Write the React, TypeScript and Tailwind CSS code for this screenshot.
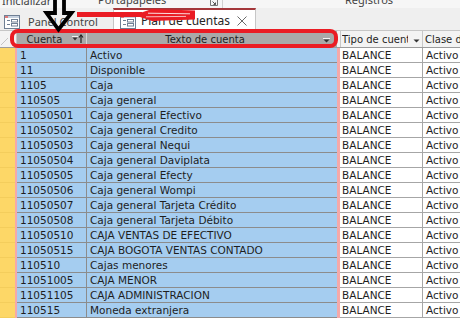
import React from "react";

const rows: [string, string][] = [
  ["1", "Activo"],
  ["11", "Disponible"],
  ["1105", "Caja"],
  ["110505", "Caja general"],
  ["11050501", "Caja general Efectivo"],
  ["11050502", "Caja general Credito"],
  ["11050503", "Caja general Nequi"],
  ["11050504", "Caja general Daviplata"],
  ["11050505", "Caja general Efecty"],
  ["11050506", "Caja general Wompi"],
  ["11050507", "Caja general Tarjeta Crédito"],
  ["11050508", "Caja general Tarjeta Débito"],
  ["11050510", "CAJA VENTAS DE EFECTIVO"],
  ["11050515", "CAJA BOGOTA VENTAS CONTADO"],
  ["110510", "Cajas menores"],
  ["11051005", "CAJA MENOR"],
  ["11051105", "CAJA ADMINISTRACION"],
  ["110515", "Moneda extranjera"],
];

function FormIcon() {
  return (
    <svg width="16" height="14" viewBox="0 0 16 14">
      <rect x="0.5" y="0.5" width="15" height="13" fill="#ffffff" stroke="#6f7f94" />
      <rect x="1" y="1" width="14" height="2" fill="#c7d2e0" />
      <rect x="1" y="1" width="3" height="2" fill="#e07a7a" />
      <rect x="3" y="5" width="3" height="1" fill="#6f7f94" />
      <rect x="7.5" y="4.5" width="6" height="2.5" fill="#ffffff" stroke="#6f7f94" strokeWidth="1" />
      <rect x="3" y="9" width="3" height="1" fill="#6f7f94" />
      <rect x="7.5" y="8.5" width="6" height="2.5" fill="#ffffff" stroke="#6f7f94" strokeWidth="1" />
    </svg>
  );
}

function DropArrow() {
  return (
    <svg width="7" height="5" viewBox="0 0 7 5">
      <path d="M0 0.5 H7" stroke="#f5f5f5" strokeWidth="1" />
      <path d="M0.5 1.5 L6.5 1.5 L3.5 4.5 Z" fill="#333333" />
    </svg>
  );
}

export default function App() {
  const grid = { fontFamily: '"DejaVu Sans", Tahoma, sans-serif' };
  const ui = { fontFamily: '"Noto Sans", "Open Sans", sans-serif' };
  return (
    <div className="relative w-[460px] h-[318px] overflow-hidden bg-white text-[#1e1e1e]">
      {/* Ribbon remnant */}
      <div className="h-[8px] overflow-hidden bg-[#f6f6f6] flex text-[11px] text-[#444444]" style={ui}>
        <div className="w-[96px] pl-[2px] mt-[-7px] leading-[15px]">Inicializar</div>
        <div className="w-[110px] pl-[2px] mt-[-8px] leading-[15px]">Portapapeles</div>
        <div className="w-[16px] flex items-start justify-center">
          <svg width="8" height="6" viewBox="0 0 8 6">
            <path d="M0.5 0 V5.5 H7.5 V0" fill="none" stroke="#777777" />
            <path d="M2.5 1.5 L5.5 4.5 M5.5 2.5 V4.5 H3.5" fill="none" stroke="#555555" />
          </svg>
        </div>
        <div className="w-[1px] h-[8px] bg-[#d0d0d0]" />
        <div className="w-[122px]" />
        <div className="mt-[-8px] leading-[15px]">Registros</div>
      </div>

      {/* Document tab bar */}
      <div className="h-[23px] bg-[#efefef] border-b border-[#c6c6c6] flex items-end" style={ui}>
        <div className="w-[113px] h-[22px] flex items-start pt-[6px] pl-[4px] gap-[8px] text-[11px] text-[#444444] leading-[15px]">
          <div className="pt-[1px]">
            <FormIcon />
          </div>
          <span>Panel Control</span>
        </div>
        <div className="w-[143px] h-[22px] bg-white border-t-2 border-t-[#a4373a] border-x border-x-[#c6c6c6] flex items-start pt-[3px] pl-[6px] text-[12px] text-[#262626] leading-[16px]">
          <div className="pt-[2px] mr-[5px]">
            <FormIcon />
          </div>
          <span>Plan de cuentas</span>
          <svg className="ml-[7px] mt-[3px]" width="10" height="10" viewBox="0 0 10 10">
            <path d="M0.5 0.5 L9.5 9.5 M9.5 0.5 L0.5 9.5" stroke="#6a6a6a" strokeWidth="1" />
          </svg>
        </div>
      </div>

      {/* Column headers */}
      <div className="flex h-[17px] border-b border-[#9c9c9c] text-[10px]" style={grid}>
        <div className="w-[17px] bg-[#f3f3f3] border-r border-[#c8c8c8] flex items-end">
          <svg width="16" height="16" viewBox="0 0 16 16">
            <path d="M1 14 L8 7" stroke="#c4c4c4" strokeWidth="1" />
          </svg>
        </div>
        <div className="w-[70px] bg-[#a9a9a9] border-r border-[#d6d6d6] flex items-start pt-[2px] leading-[14px]">
          <span className="w-[55px] text-center">Cuenta</span>
          <svg className="mt-[1px]" width="12" height="10" viewBox="0 0 12 10">
            <path d="M0 2.5 H6" stroke="#f2f2f2" strokeWidth="1" />
            <path d="M0.5 3.5 L5.5 3.5 L3 6.5 Z" fill="#333333" />
            <path d="M9 9 V1.5" stroke="#202020" strokeWidth="1.2" />
            <path d="M7 3.5 L9 1 L11 3.5" fill="none" stroke="#202020" strokeWidth="1.2" />
          </svg>
        </div>
        <div className="w-[250px] bg-[#a9a9a9] flex items-start pt-[2px] leading-[14px]">
          <span className="w-[236px] text-center">
            <span className="underline underline-offset-1">T</span>exto de cuenta
          </span>
          <div className="mt-[5px]">
            <DropArrow />
          </div>
        </div>
        <div className="w-[3px] bg-[#f3f3f3]" />
        <div className="w-[83px] bg-[#f3f3f3] border-x border-[#c8c8c8] flex items-start pt-[2px] leading-[14px] pl-[1px] overflow-hidden">
          <span className="whitespace-nowrap w-[66px] overflow-hidden">Tipo de cuent</span>
          <div className="mt-[5px] ml-[5px]">
            <DropArrow />
          </div>
        </div>
        <div className="flex-1 bg-[#f3f3f3] pt-[2px] leading-[14px] pl-[2px] whitespace-nowrap overflow-hidden">
          Clase de cuenta
        </div>
      </div>

      {/* Rows */}
      <div className="text-[10.5px]" style={grid}>
        {rows.map(([c, t], i) => (
          <div key={i} className="flex h-[15px]">
            <div className="w-[15px] bg-[#fdd767] border-b border-[#f4cd5c]" />
            <div className="w-[2px] bg-[#f4a9a9]" />
            <div className="w-[70px] bg-[#a5cdf0] border-b border-r border-[#8c8c8c] pl-[3px] pt-[1px] leading-[13px] whitespace-nowrap overflow-hidden">
              {c}
            </div>
            <div className="w-[250px] bg-[#a5cdf0] border-b border-[#8c8c8c] pl-[3px] pt-[1px] leading-[13px] whitespace-nowrap overflow-hidden">
              {t}
            </div>
            <div className="w-[3px] bg-[#f4a9a9]" />
            <div className="w-[83px] bg-white border-b border-r border-[#a6a6a6] pl-[2px] pt-[1px] leading-[13px]">
              BALANCE
            </div>
            <div className="flex-1 bg-white border-b border-[#a6a6a6] pl-[3px] pt-[1px] leading-[13px]">
              Activo
            </div>
          </div>
        ))}
      </div>

      {/* Hand-drawn annotations */}
      <svg className="absolute left-0 top-0 pointer-events-none" width="460" height="318" viewBox="0 0 460 318">
        <rect x="12" y="31" width="324" height="15" rx="6" fill="none" stroke="#ea1c24" strokeWidth="4" />
        <path d="M77 14.5 H142" stroke="#ea1c24" strokeWidth="5" />
        <path d="M134 15 L152 9 L195 10.5 L195 19.5 L152 21 Z" fill="#ea1c24" />
        <path d="M148 13.2 L190 13.8" stroke="#ffffff" strokeWidth="1" opacity="0.85" />
        <path d="M146 16.8 L186 16.4" stroke="#ffffff" strokeWidth="1" opacity="0.7" />
        <path d="M55 -3 V13 H46.5 L58.5 29.5 L71.5 13 H64 V-3" fill="none" stroke="#000000" strokeWidth="3.8" strokeLinejoin="miter" />
      </svg>
    </div>
  );
}
